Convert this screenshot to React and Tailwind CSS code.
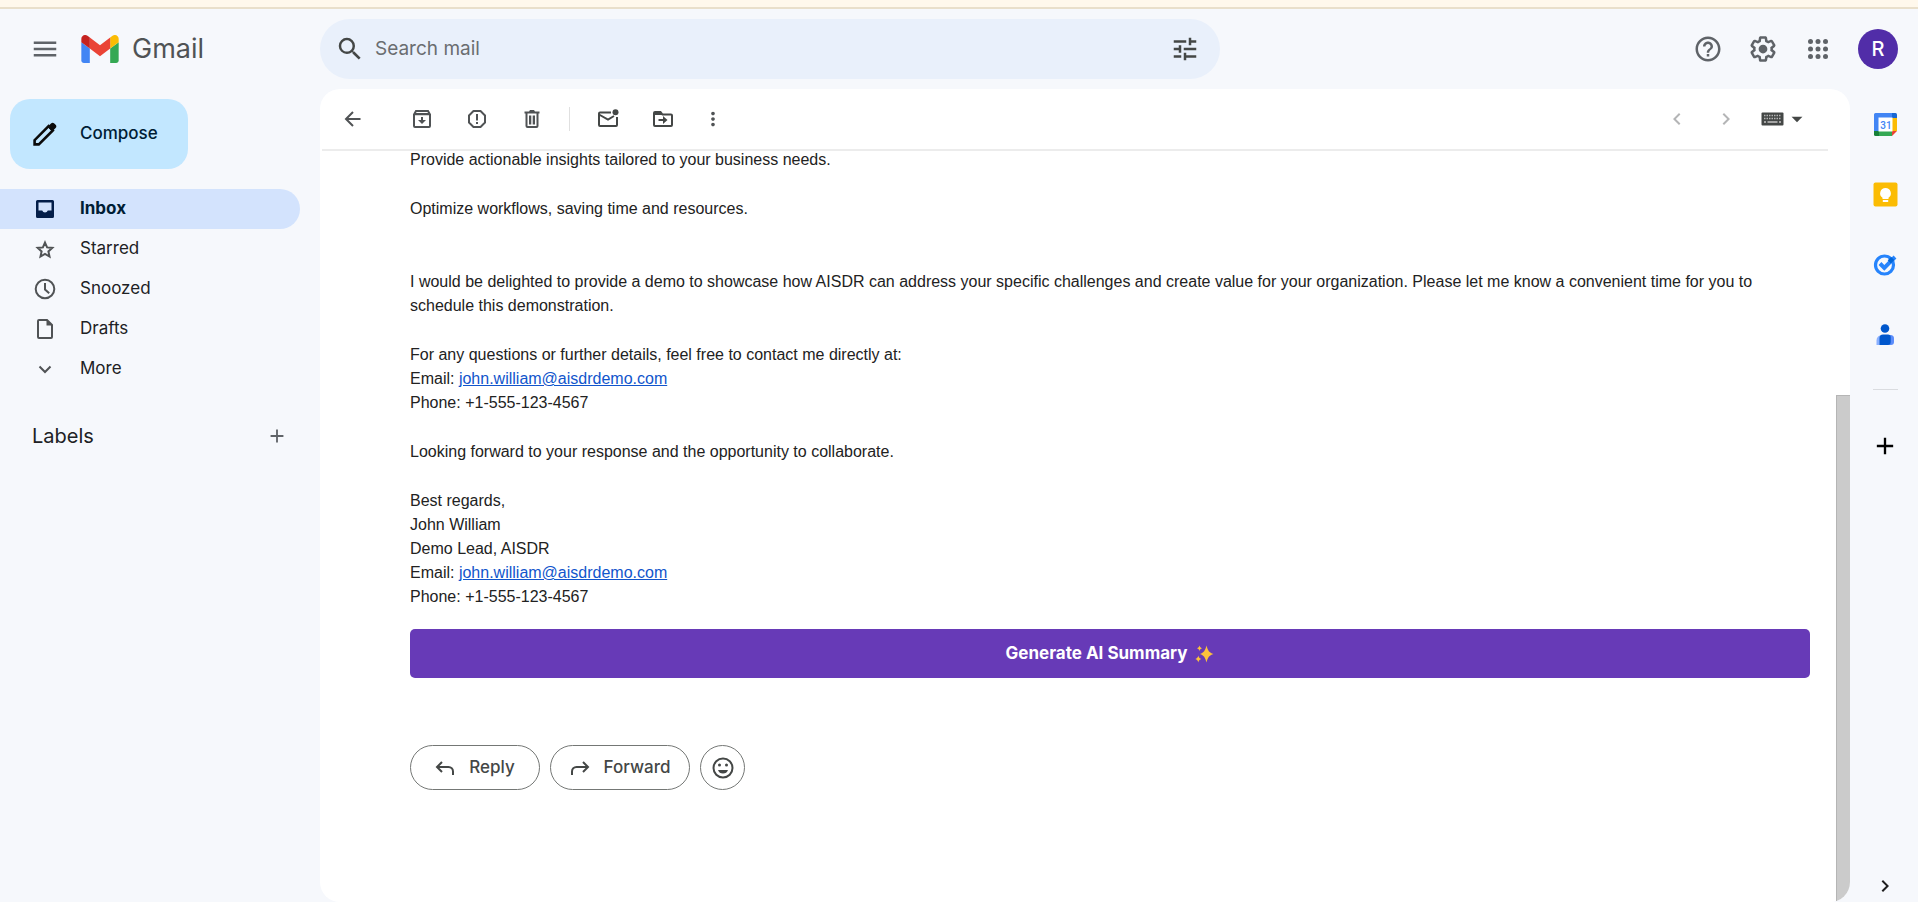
import {
  MdMenu,
  MdSearch,
  MdTune,
  MdHelpOutline,
  MdAdd,
  MdMoreVert,
  MdChevronLeft,
  MdChevronRight,
  MdArrowDropDown,
} from 'react-icons/md';

const navItems = [
  { label: 'Inbox', icon: InboxIcon, size: 20, active: true },
  { label: 'Starred', icon: StarIcon, size: 20 },
  { label: 'Snoozed', icon: ClockIcon, size: 22 },
  { label: 'Drafts', icon: DraftIcon, size: 22 },
  { label: 'More', icon: ChevronDownIcon, size: 20 },
];

function GmailLogo() {
  return (
    <svg width="38" height="28" viewBox="52 42 88 66" aria-hidden="true">
      <path fill="#4285f4" d="M58 108h14V74L52 59v43c0 3.32 2.69 6 6 6" />
      <path fill="#34a853" d="M120 108h14c3.32 0 6-2.69 6-6V59l-20 15" />
      <path fill="#fbbc04" d="M120 48v26l20-15v-8c0-7.42-8.47-11.65-14.4-7.2" />
      <path fill="#ea4335" d="M72 74V48l24 18 24-18v26L96 92" />
      <path fill="#c5221f" d="M52 51v8l20 15V48l-5.6-4.2c-5.94-4.45-14.4-.22-14.4 7.2" />
    </svg>
  );
}

function PencilIcon() {
  return (
    <svg width="24" height="24" viewBox="0 0 24 24" fill="none" aria-hidden="true">
      <path d="M1.6 22.4v-4.200L15.600 4.200l4.200 4.200L5.800 22.400z" stroke="#0b0b0b" strokeWidth="2.600" />
      <path d="M14.600 4.800 18 1.400c1-1 2.300-1 3.300 0l1.300 1.300c1 1 1 2.300 0 3.300l-3.400 3.400z" fill="#0b0b0b" />
    </svg>
  );
}

function InboxIcon({ size }) {
  return (
    <svg width={size} height={size} viewBox="0 0 20 20" aria-hidden="true">
      <path fill="#041e49" fillRule="evenodd" d="M2.500 1h15A1.500 1.500 0 0 1 19 2.500v15a1.500 1.500 0 0 1-1.500 1.500h-15A1.500 1.500 0 0 1 1 17.500v-15A1.500 1.500 0 0 1 2.500 1zM3.500 3.500v8h3.700a3 3 0 0 0 5.600 0h3.700v-8z" />
    </svg>
  );
}

function StarIcon({ size }) {
  return (
    <svg width={size} height={size} viewBox="0 0 20 20" fill="none" stroke="currentColor" strokeWidth="2" aria-hidden="true">
      <path d="M10 3.600l2.100 4.800 5.200.5-3.900 3.500 1.100 5.100L10 14.900l-4.500 2.600 1.100-5.100-3.900-3.500 5.200-.5z" />
    </svg>
  );
}

function ClockIcon({ size }) {
  return (
    <svg width={size} height={size} viewBox="0 0 22 22" fill="none" stroke="currentColor" strokeWidth="2" aria-hidden="true">
      <circle cx="11" cy="11" r="9.300" />
      <path d="M11 5v6.500l4.200 3.800" />
    </svg>
  );
}

function DraftIcon({ size }) {
  return (
    <svg width={size} height={size} viewBox="0 0 22 22" aria-hidden="true">
      <path fill="none" stroke="currentColor" strokeWidth="2" d="M5 2h8l5 5v12a1 1 0 0 1-1 1H5a1 1 0 0 1-1-1V3a1 1 0 0 1 1-1z" />
      <path fill="currentColor" d="M12.500 1.500v6h6z" />
    </svg>
  );
}

function ChevronDownIcon({ size }) {
  return (
    <svg width={size} height={size} viewBox="0 0 20 20" fill="none" stroke="currentColor" strokeWidth="2" aria-hidden="true">
      <path d="M4.500 7.500 10 13l5.500-5.500" />
    </svg>
  );
}

function BackIcon() {
  return (
    <svg width="20" height="20" viewBox="0 0 20 20" fill="none" stroke="currentColor" strokeWidth="2" aria-hidden="true">
      <path d="M17.500 10h-14M10 3l-7 7 7 7" />
    </svg>
  );
}

function GearIcon() {
  return (
    <svg width="30" height="30" viewBox="0 0 24 24" fill="currentColor" aria-hidden="true">
      <path d="M13.850 22.250h-3.700c-.74 0-1.360-.54-1.450-1.270l-.27-1.890c-.27-.14-.53-.29-.79-.46l-1.800.72c-.7.26-1.470-.03-1.810-.65L2.200 15.530c-.35-.66-.2-1.440.36-1.880l1.530-1.190c-.01-.15-.02-.3-.02-.46 0-.15.01-.31.02-.46l-1.520-1.190c-.59-.45-.74-1.260-.37-1.880l1.850-3.190c.34-.62 1.110-.9 1.790-.63l1.810.73c.26-.17.52-.32.780-.46l.27-1.910c.09-.7.710-1.250 1.440-1.250h3.700c.740 0 1.360.54 1.450 1.270l.27 1.890c.27.14.53.29.79.46l1.800-.72c.71-.26 1.480.03 1.820.65l1.840 3.180c.36.66.2 1.440-.36 1.880l-1.520 1.190c.01.15.02.3.02.46s-.01.31-.02.46l1.520 1.190c.56.45.72 1.230.37 1.860l-1.860 3.220c-.34.62-1.110.9-1.800.63l-1.800-.72c-.26.17-.52.32-.78.46l-.27 1.910c-.1.680-.720 1.220-1.460 1.220zm-3.230-2h2.760l.37-2.550.53-.22c.44-.18.88-.44 1.340-.78l.45-.34 2.380.96 1.380-2.400-2.030-1.580.07-.56c.03-.26.06-.51.06-.78s-.03-.53-.06-.78l-.07-.56 2.030-1.580-1.390-2.400-2.390.96-.45-.35c-.42-.32-.87-.58-1.330-.77l-.52-.22-.37-2.550h-2.760l-.37 2.550-.53.21c-.44.19-.88.44-1.340.79l-.45.33-2.380-.95-1.390 2.390 2.030 1.580-.07.56a7 7 0 0 0-.06.79c0 .26.02.53.06.78l.07.56-2.030 1.580 1.380 2.400 2.390-.96.45.35c.43.33.86.58 1.330.77l.53.22z" />
      <circle cx="12" cy="12" r="3.500" />
    </svg>
  );
}

function AppsIcon() {
  return (
    <svg width="20" height="20" viewBox="0 0 20 20" fill="currentColor" aria-hidden="true">
      {[2.5, 10, 17.5].map(y => [2.5, 10, 17.5].map(x => <circle key={`${x}-${y}`} cx={x} cy={y} r="2.5" />))}
    </svg>
  );
}

function ArchiveIcon() {
  return (
    <svg width="20" height="20" viewBox="0 0 20 20" aria-hidden="true">
      <path fill="none" stroke="currentColor" strokeWidth="2" d="M2 5.500 4 2h12l2 3.500V17a1 1 0 0 1-1 1H3a1 1 0 0 1-1-1z" />
      <path fill="currentColor" d="M2 4h16v2.200H2zM9 8h2v3h3l-4 4-4-4h3z" />
    </svg>
  );
}

function SpamIcon() {
  return (
    <svg width="20" height="20" viewBox="0 0 20 20" aria-hidden="true">
      <path fill="none" stroke="currentColor" strokeWidth="2" strokeLinejoin="round" d="M6.500 2h7L18 6.500v7L13.500 18h-7L2 13.500v-7z" />
      <path fill="currentColor" d="M9 5h2v6.500H9zM9 13h2v2H9z" />
    </svg>
  );
}

function TrashIcon() {
  return (
    <svg width="20" height="20" viewBox="0 0 20 20" aria-hidden="true">
      <path fill="none" stroke="currentColor" strokeWidth="2" d="M4.500 4v13a1 1 0 0 0 1 1h9a1 1 0 0 0 1-1V4" />
      <path fill="currentColor" d="M2.500 2.500H7l1-1.500h4l1 1.500h4.500v2h-15zM7 6.500h2.300v9H7zM10.700 6.500H13v9h-2.300z" />
    </svg>
  );
}

function UnreadIcon() {
  return (
    <svg width="22" height="20" viewBox="0 0 22 20" aria-hidden="true">
      <path fill="none" stroke="currentColor" strokeWidth="2" d="M14 3.500H3a1 1 0 0 0-1 1V16a1 1 0 0 0 1 1h16a1 1 0 0 0 1-1V8" />
      <path fill="none" stroke="currentColor" strokeWidth="2" d="M2 5.500l9 5 6-3.500" />
      <circle cx="18.500" cy="3.200" r="3" fill="currentColor" />
    </svg>
  );
}

function MoveIcon() {
  return (
    <svg width="22" height="20" viewBox="0 0 22 20" aria-hidden="true">
      <path fill="none" stroke="currentColor" strokeWidth="2" d="M3 3h5.500l2 2.500H19a1 1 0 0 1 1 1V16a1 1 0 0 1-1 1H3a1 1 0 0 1-1-1V4a1 1 0 0 1 1-1z" />
      <path fill="currentColor" d="M2 3h6.500l2 3H2zM6.500 10h4.500V7l4.500 4-4.500 4v-3H6.500z" />
    </svg>
  );
}

function KeyboardIcon() {
  return (
    <svg width="23" height="14" viewBox="0 0 23 14" aria-hidden="true">
      <rect x="0.500" y="0.500" width="22" height="13" rx="1" fill="#444746" />
      <path stroke="#b5b5b5" strokeWidth="1.300" strokeDasharray="1.500 1" d="M3 3.500h17M3 6.500h17" />
      <path stroke="#c4c4c4" strokeWidth="1.500" d="M3 10h2M6.500 10h10M18 10h2" />
    </svg>
  );
}

function CalendarIcon() {
  return (
    <svg width="25" height="25" viewBox="0 0 25 25" aria-hidden="true">
      <path fill="#4285f4" d="M2.500 1H19v5H6v14H1V2.500A1.500 1.500 0 0 1 2.500 1z" />
      <path fill="#1967d2" d="M19 1h3.500A1.500 1.500 0 0 1 24 2.500V6h-5z" />
      <path fill="#fbbc04" d="M19 6h5v13h-5z" />
      <path fill="#34a853" d="M6 19h13v5H6z" />
      <path fill="#188038" d="M1 19h5v5H2.500A1.500 1.500 0 0 1 1 22.500z" />
      <path fill="#ea4335" d="M19 19h5l-5 5z" />
      <path fill="#fff" d="M5.500 5.500h14v14h-14z" />
      <text x="13" y="16.500" textAnchor="middle" fontFamily="Roboto, sans-serif" fontSize="10" fontWeight="500" fill="#4285f4">31</text>
    </svg>
  );
}

function KeepIcon() {
  return (
    <svg width="25" height="25" viewBox="0 0 25 25" aria-hidden="true">
      <rect x="0.500" y="0.500" width="24" height="24" rx="2" fill="#fbbc04" />
      <path fill="#fff" d="M12.500 6a5.300 5.300 0 0 0-3 9.700V17h6v-1.300a5.300 5.300 0 0 0-3-9.700zM9.800 18h5.400v2H9.800z" />
    </svg>
  );
}

function TasksIcon() {
  return (
    <svg width="24" height="24" viewBox="0 0 24 24" fill="none" aria-hidden="true">
      <circle cx="11.500" cy="12" r="9" stroke="#2684fc" strokeWidth="3.200" />
      <path stroke="#2684fc" strokeWidth="4" d="m7 10.500 4.300 4.300L22 4" />
      <path stroke="#0066da" strokeWidth="4.500" d="M16.300 8.900l3.400-3.400" />
    </svg>
  );
}

function ContactsIcon() {
  return (
    <svg width="20" height="24" viewBox="0 0 20 24" aria-hidden="true">
      <circle cx="10" cy="5.500" r="4.300" fill="#0057cc" />
      <path fill="#8ab0ff" d="M7 12h5v10H1.500v-4.500A5.500 5.500 0 0 1 7 12z" />
      <path fill="#5c8dfb" d="M12 12h3.500a3.500 3.500 0 0 1 3.500 3.500V19a3 3 0 0 1-3 3h-4z" />
      <path fill="#0057cc" d="M8 11.500h5a2.700 2.700 0 0 1 2.700 2.700V19a3 3 0 0 1-3 3H4.500v-7A3.500 3.500 0 0 1 8 11.500z" />
    </svg>
  );
}

function ReplyIcon({ flip }) {
  return (
    <svg width="20" height="18" viewBox="0 0 20 18" fill="none" stroke="currentColor" strokeWidth="2" aria-hidden="true">
      {flip ? (
        <path d="M13 3l5 5-5 5M18 8H6.500A4.500 4.500 0 0 0 2 12.500V16" />
      ) : (
        <path d="M7 3 2 8l5 5M2 8h11.500a4.500 4.500 0 0 1 4.500 4.500V16" />
      )}
    </svg>
  );
}

function EmojiIcon() {
  return (
    <svg width="22" height="22" viewBox="0 0 22 22" fill="currentColor" aria-hidden="true">
      <circle cx="11" cy="11" r="9.500" fill="none" stroke="currentColor" strokeWidth="2" />
      <circle cx="7.500" cy="8" r="1.500" />
      <circle cx="14.500" cy="8" r="1.500" />
      <path d="M6 13h10a5.300 5.300 0 0 1-10 0z" />
    </svg>
  );
}

function SparklesIcon() {
  return (
    <svg width="19" height="18" viewBox="0 0 19 18" fill="#fcc23c" aria-hidden="true">
      <path d="M11.500.5c1.300 5.200 2.700 7 7 8.500-4.300 1.500-5.700 3.300-7 8.500-1.300-5.200-2.700-7-6.500-8.500 3.800-1.500 5.200-3.300 6.500-8.500z" />
      <path d="M4.500.5c.5 1.700 1 2.200 2.500 2.800-1.500.6-2 1.100-2.500 2.800-.5-1.700-1-2.200-2.500-2.800 1.500-.6 2-1.100 2.500-2.800zM3.300 10.500c.6 2.200 1.200 2.800 3 3.500-1.800.7-2.400 1.300-3 3.500-.6-2.200-1.200-2.800-3-3.500 1.800-.7 2.400-1.300 3-3.500z" />
    </svg>
  );
}

function IconButton({ label, className = '', children }) {
  return (
    <button type="button" aria-label={label} className={`flex shrink-0 items-center justify-center ${className}`}>
      {children}
    </button>
  );
}

function Header() {
  return (
    <header className="flex h-20 shrink-0 items-center pr-5">
      <div className="flex w-80 shrink-0 items-center pl-[30px]">
        <IconButton label="Main menu" className="mr-[21px] size-[30px] text-[#5f6368]">
          <MdMenu size={30} />
        </IconButton>
        <a href="#inbox" className="flex items-center gap-[13px] text-[#505355]">
          <GmailLogo />
          <span className="text-[27px] leading-8">Gmail</span>
        </a>
      </div>
      <form className="flex h-[60px] max-w-[900px] flex-1 items-center rounded-full bg-[#e9f0fb] pr-5 pl-[15px] text-[#444746]">
        <IconButton label="Search" className="size-[30px]">
          <MdSearch size={30} />
        </IconButton>
        <input
          type="text"
          aria-label="Search mail"
          placeholder="Search mail"
          className="ml-2.5 min-w-0 flex-1 bg-transparent text-[19px] outline-none placeholder:text-[#6a6d70]"
        />
        <IconButton label="Search options" className="size-[30px]">
          <MdTune size={30} />
        </IconButton>
      </form>
      <div className="ml-auto flex items-center gap-[25px] text-[#5f6368]">
        <IconButton label="Support" className="size-[30px]">
          <MdHelpOutline size={30} />
        </IconButton>
        <IconButton label="Settings" className="size-[30px]">
          <GearIcon />
        </IconButton>
        <IconButton label="Google apps" className="size-[30px]">
          <AppsIcon />
        </IconButton>
        <button type="button" aria-label="Account" className="size-10 rounded-full bg-[#512da8] text-xl leading-10 font-medium text-white">
          R
        </button>
      </div>
    </header>
  );
}

function Sidebar() {
  return (
    <aside className="w-80 shrink-0 pt-2.5">
      <button type="button" className="ml-2.5 flex h-[70px] items-center gap-[23px] rounded-[20px] bg-[#c2e7ff] pr-[30px] pl-[23px] text-[17px] font-medium text-[#001d35]">
        <PencilIcon />
        Compose
      </button>
      <nav className="mt-5 mr-5">
        {navItems.map(({ label, icon: Icon, size, active }) => (
          <a
            key={label}
            href={`#${label.toLowerCase()}`}
            className={
              active
                ? 'flex h-10 items-center gap-6 rounded-r-full bg-[#d3e3fd] pl-[34px] text-[17px] font-bold text-[#001d35]'
                : 'flex h-10 items-center gap-6 pl-[34px] text-[17px] text-[#202124]'
            }
          >
            <span className={active ? 'flex w-[22px] justify-center' : 'flex w-[22px] justify-center text-[#505355]'}>
              <Icon size={size} />
            </span>
            {label}
          </a>
        ))}
      </nav>
      <div className="mt-[27px] flex h-10 items-center justify-between pr-8 pl-8">
        <h2 className="text-xl text-[#202124]">Labels</h2>
        <IconButton label="Create new label" className="size-[22px] text-[#5f6368]">
          <MdAdd size={26} />
        </IconButton>
      </div>
    </aside>
  );
}

function Toolbar() {
  return (
    <div className="mr-[22px] ml-0.5 flex h-[62px] shrink-0 items-center border-b-2 border-[#ececec] pr-[18px] pl-5 text-[#505355]">
      <IconButton label="Back to Inbox" className="mr-12 size-[22px]">
        <BackIcon />
      </IconButton>
      <div className="flex items-center gap-[35px]">
        <IconButton label="Archive" className="size-5"><ArchiveIcon /></IconButton>
        <IconButton label="Report spam" className="size-5"><SpamIcon /></IconButton>
        <IconButton label="Delete" className="size-5"><TrashIcon /></IconButton>
      </div>
      <div className="mx-[27px] h-6 w-px bg-[#e0e0e0]" />
      <div className="flex items-center gap-[33px] text-[#444746]">
        <IconButton label="Mark as unread" className="w-[22px]"><UnreadIcon /></IconButton>
        <IconButton label="Move to" className="w-[22px]"><MoveIcon /></IconButton>
      </div>
      <IconButton label="More" className="ml-7 size-[22px]">
        <MdMoreVert size={22} />
      </IconButton>
      <div className="ml-auto flex items-center">
        <IconButton label="Newer" className="mr-[25px] size-6 text-[#b4b5b6]"><MdChevronLeft size={26} /></IconButton>
        <IconButton label="Older" className="mr-[23px] size-6 text-[#b4b5b6]"><MdChevronRight size={26} /></IconButton>
        <button type="button" aria-label="Input tools" className="flex items-center text-[#444746]">
          <KeyboardIcon />
          <MdArrowDropDown size={26} />
        </button>
      </div>
    </div>
  );
}

function MailLink() {
  return (
    <a href="mailto:john.william@aisdrdemo.com" className="text-[#1155cc] underline">
      john.william@aisdrdemo.com
    </a>
  );
}

function Message() {
  return (
    <div className="-mt-[3px] flex flex-col pr-10 pl-[90px]">
      <div className="flex flex-col gap-[25px] font-['Liberation_Sans',sans-serif] text-base leading-6 text-[#222222]">
        <p>Provide actionable insights tailored to your business needs.</p>
        <p>Optimize workflows, saving time and resources.</p>
        <p className="mt-6">
          I would be delighted to provide a demo to showcase how AISDR can address your specific challenges and create
          value for your organization. Please let me know a convenient time for you to schedule this demonstration.
        </p>
        <p>
          For any questions or further details, feel free to contact me directly at:
          <br />
          Email: <MailLink />
          <br />
          Phone: +1-555-123-4567
        </p>
        <p>Looking forward to your response and the opportunity to collaborate.</p>
        <p>
          Best regards,
          <br />
          John William
          <br />
          Demo Lead, AISDR
          <br />
          Email: <MailLink />
          <br />
          Phone: +1-555-123-4567
        </p>
      </div>
      <button type="button" className="mt-5 flex h-[49px] items-center justify-center gap-2 rounded-[5px] bg-[#673ab7] text-[17px] font-bold text-white">
        Generate AI Summary
        <SparklesIcon />
      </button>
      <div className="mt-[67px] flex gap-2.5 text-[17px] font-medium text-[#444746]">
        <button type="button" className="flex h-[45px] w-[130px] items-center justify-center gap-3.5 rounded-full border border-[#747775]">
          <ReplyIcon />
          Reply
        </button>
        <button type="button" className="flex h-[45px] w-[140px] items-center justify-center gap-3.5 rounded-full border border-[#747775]">
          <ReplyIcon flip />
          Forward
        </button>
        <IconButton label="Add reaction" className="size-[45px] rounded-full border border-[#747775]">
          <EmojiIcon />
        </IconButton>
      </div>
    </div>
  );
}

function SidePanel() {
  return (
    <aside className="flex w-[68px] shrink-0 flex-col items-center pt-[23px] pl-0.5">
      <div className="flex flex-col items-center gap-[45px]">
        <IconButton label="Calendar" className="size-[25px]"><CalendarIcon /></IconButton>
        <IconButton label="Keep" className="size-[25px]"><KeepIcon /></IconButton>
        <IconButton label="Tasks" className="size-[25px]"><TasksIcon /></IconButton>
        <IconButton label="Contacts" className="size-[25px]"><ContactsIcon /></IconButton>
      </div>
      <div className="mt-[42px] h-px w-[25px] bg-[#dadce0]" />
      <IconButton label="Get add-ons" className="mt-[41px] size-[30px] text-black">
        <MdAdd size={28} />
      </IconButton>
      <IconButton label="Hide side panel" className="mt-auto mb-1 size-6 text-[#1f1f1f]">
        <MdChevronRight size={24} />
      </IconButton>
    </aside>
  );
}

function App() {
  return (
    <div className="flex h-screen flex-col overflow-hidden bg-[#f6f8fc] font-[Inter,sans-serif]">
      <div className="h-[9px] shrink-0 border-b-2 border-[#e9dfcb] bg-[#fff8ec]" />
      <Header />
      <div className="flex min-h-0 flex-1">
        <Sidebar />
        <main className="relative flex min-w-0 flex-1 flex-col overflow-hidden rounded-[20px] bg-white">
          <Toolbar />
          <Message />
          <div className="absolute right-0 bottom-0 h-[507px] w-3.5 border-t border-l border-[#b5b5b5] bg-[#cbcbcb]" />
        </main>
        <SidePanel />
      </div>
    </div>
  );
}

export default App;
